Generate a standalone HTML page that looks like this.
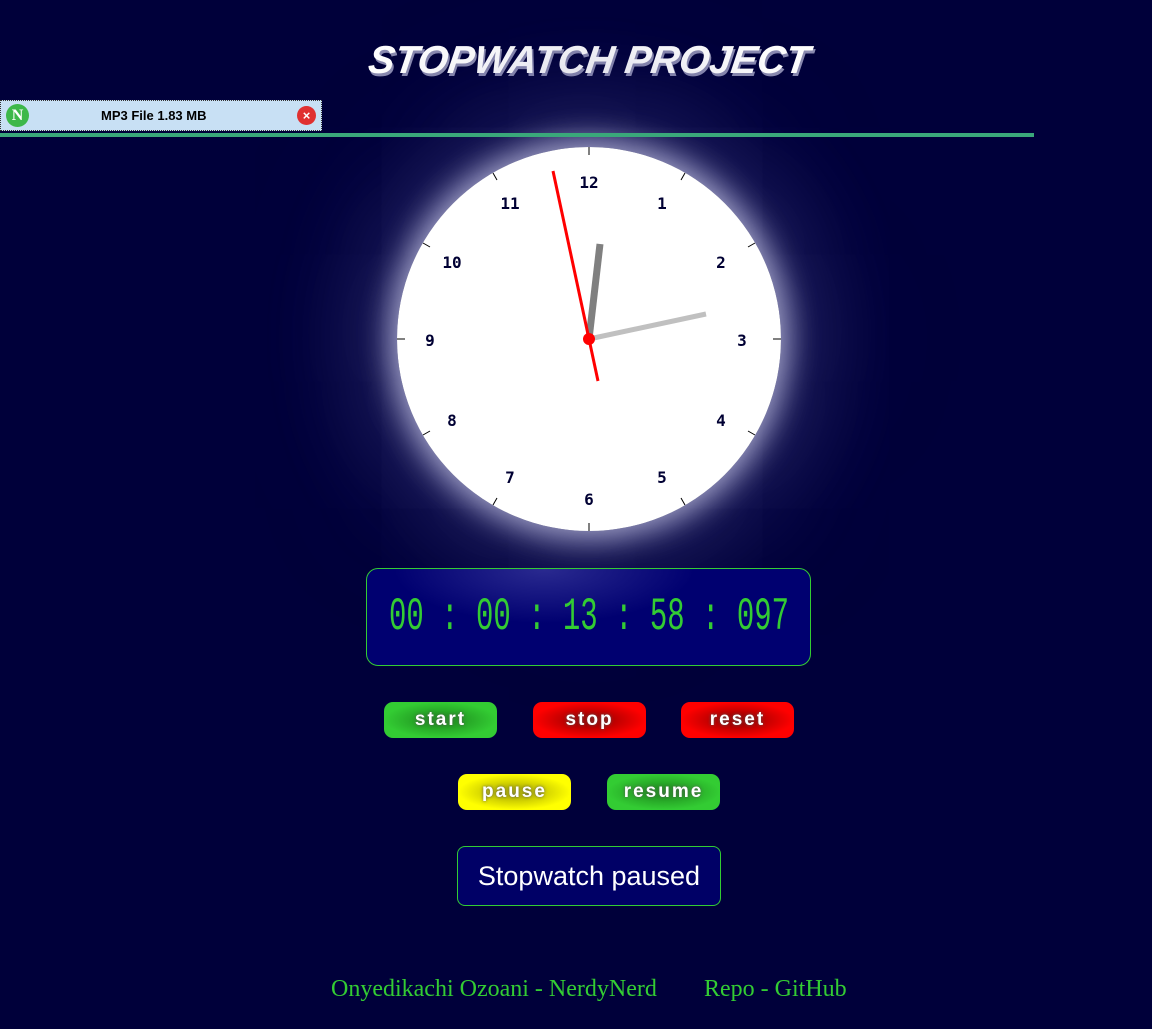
<!DOCTYPE html>
<html><head><style>
html,body{margin:0;padding:0;background:#00003a;width:1152px;height:1029px;overflow:hidden;position:relative;font-family:"Liberation Sans",sans-serif}
.abs{position:absolute}
h1{position:absolute;left:0;width:1178px;top:39px;margin:0;text-align:center;font:italic 900 39px "Liberation Sans",sans-serif;color:#fff;letter-spacing:0px;text-shadow:2px 3px 0 #8a8ab0;transform:skewX(-8deg)}
.bar{left:0;top:100px;width:320px;height:29px;background:#c8e0f4;border:1px dotted #333}
.line{left:0;top:133px;width:1034px;height:4px;background:#3aa87a}
.clock{left:397px;top:147px;width:384px;height:384px;border-radius:50%;box-shadow:0 0 30px 8px rgba(220,220,250,.7),0 0 90px 40px rgba(110,110,180,.3),0 0 160px 70px rgba(30,30,100,.2)}
.timer{left:366px;top:568px;width:443px;height:96px;border:1px solid #33cc33;border-radius:12px;background:radial-gradient(ellipse at 40% 0,#2a2a90 0,#000070 40%);color:#33cc33;overflow:hidden}
.timer span{position:absolute;left:50%;top:0;line-height:96px;font:46px/96px "Liberation Mono",monospace;white-space:nowrap;transform:translateX(-50%) scaleX(.63)}
.btn{height:36px;width:113px;border-radius:9px;color:#fff;font:bold 19px "Liberation Sans",sans-serif;text-align:center;line-height:36px;letter-spacing:2px;text-shadow:0 0 3px #555}
.g{background:radial-gradient(ellipse,#229922 20%,#33cc33 70%)}
.r{background:radial-gradient(ellipse,#aa0000 20%,#ff0000 70%)}
.y{background:radial-gradient(ellipse,#bbbb00 20%,#ffff00 70%)}
.status{left:457px;top:846px;width:262px;height:58px;border:1px solid #33cc33;border-radius:8px;background:#000066;color:#fff;font:27px "Liberation Sans",sans-serif;text-align:center;line-height:58px}
.foot{top:976px;color:#33cc33;font:24px "Liberation Serif",serif}
</style></head><body>
<h1>STOPWATCH PROJECT</h1>
<div class="abs clock"></div>
<div class="abs bar">
<div class="abs" style="left:5px;top:3px;width:23px;height:23px;border-radius:50%;background:#3db84a;color:#fff;font:bold 16px 'Liberation Serif',serif;text-align:center;line-height:23px">N</div>
<div class="abs" style="left:100px;top:7px;font:bold 13px 'Liberation Sans',sans-serif;color:#000">MP3 File 1.83 MB</div>
<div class="abs" style="left:296px;top:5px;width:19px;height:19px;border-radius:50%;background:#e03030;color:#fff;font:bold 13px sans-serif;text-align:center;line-height:19px">×</div>
</div>
<div class="abs line"></div>
<svg class="abs" style="left:0;top:0" width="1152" height="1029">
<circle cx="589" cy="339" r="192" fill="#fff"/>
<g stroke="#000" stroke-width="1">
<line x1="589" y1="147" x2="589" y2="155"/><line x1="589" y1="531" x2="589" y2="523"/>
<line x1="397" y1="339" x2="405" y2="339"/><line x1="781" y1="339" x2="773" y2="339"/>
<line x1="685" y1="173" x2="681" y2="180"/><line x1="755" y1="243" x2="748" y2="247"/>
<line x1="755" y1="435" x2="748" y2="431"/><line x1="685" y1="505" x2="681" y2="498"/>
<line x1="493" y1="505" x2="497" y2="498"/><line x1="423" y1="435" x2="430" y2="431"/>
<line x1="423" y1="243" x2="430" y2="247"/><line x1="493" y1="173" x2="497" y2="180"/>
</g>
<g font-family="DejaVu Sans Mono,monospace" font-weight="bold" font-size="16" fill="#000033" text-anchor="middle">
<text x="589" y="188">12</text><text x="662" y="209">1</text><text x="721" y="268">2</text>
<text x="742" y="346">3</text><text x="721" y="426">4</text><text x="662" y="483">5</text>
<text x="589" y="505">6</text><text x="510" y="483">7</text><text x="452" y="426">8</text>
<text x="430" y="346">9</text><text x="452" y="268">10</text><text x="510" y="209">11</text>
</g>
<line x1="589" y1="339" x2="600" y2="244" stroke="#808080" stroke-width="7"/>
<line x1="589" y1="339" x2="706" y2="314" stroke="#c0c0c0" stroke-width="5"/>
<line x1="598" y1="381" x2="553" y2="171" stroke="#f00" stroke-width="3"/>
<circle cx="589" cy="339" r="6" fill="#f00"/>
</svg>
<div class="abs timer"><span>00 : 00 : 13 : 58 : 097</span></div>
<div class="abs btn g" style="left:384px;top:702px">start</div>
<div class="abs btn r" style="left:533px;top:702px">stop</div>
<div class="abs btn r" style="left:681px;top:702px">reset</div>
<div class="abs btn y" style="left:458px;top:774px">pause</div>
<div class="abs btn g" style="left:607px;top:774px">resume</div>
<div class="abs status">Stopwatch paused</div>
<div class="abs foot" style="left:331px">Onyedikachi Ozoani - NerdyNerd</div>
<div class="abs foot" style="left:704px">Repo - GitHub</div>
</body></html>
